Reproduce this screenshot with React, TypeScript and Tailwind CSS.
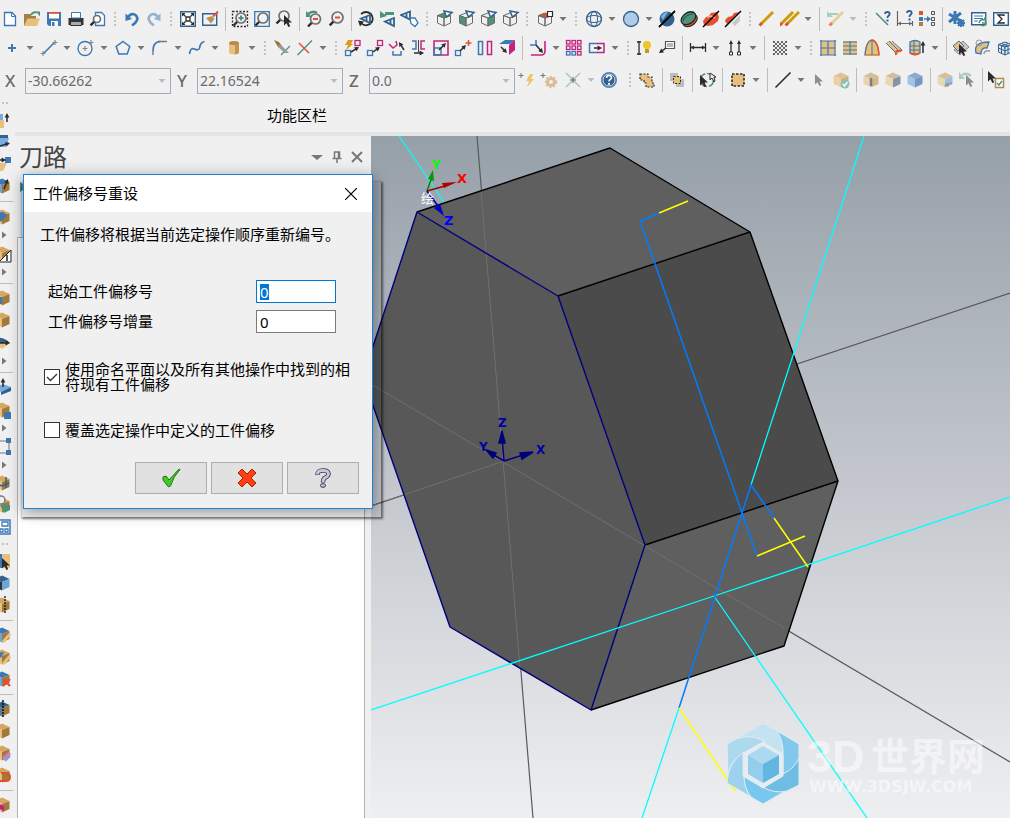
import React from "react";

type Kids = { children?: React.ReactNode };

const BLUE = "#3b78b4";
const NAVY = "#33608c";
const GOLD = "#e8c07d";
const GREEN = "#4f927b";
const RED = "#e2502f";
const PINK = "#c2237f";
const DARK = "#2b2b2b";

function Art({ children }: Kids) {
  return (
    <svg viewBox="0 0 20 20" className="h-5 w-5 shrink-0" fill="none" aria-hidden="true">
      {children}
    </svg>
  );
}

function Caret({ faded, side }: { faded?: boolean; side?: boolean }) {
  return (
    <svg viewBox="0 0 8 8" className="h-2 w-2 shrink-0" aria-hidden="true">
      <path d={side ? "M2 0.5L6.5 4L2 7.5z" : "M0.5 2H7.5L4 6z"} fill={faded ? "#bdbdbd" : "#777"} />
    </svg>
  );
}

/* ---------- shared icon parts ---------- */

function Lens({ x = 11, y = 8, r = 4.5, tint = "none" }: { x?: number; y?: number; r?: number; tint?: string }) {
  return (
    <>
      <path d={`M${x - r * 0.7} ${y + r * 0.7}L${x - r * 0.7 - 4} ${y + r * 0.7 + 4}`} stroke={DARK} strokeWidth="2.4" />
      <circle cx={x} cy={y} r={r} stroke="#6f6f6f" strokeWidth="1.7" fill={tint} />
    </>
  );
}

function Cube({ top = "none", left = "none", right = "none", line = "#6b6b6b" }: { top?: string; left?: string; right?: string; line?: string }) {
  return (
    <g stroke={line} strokeWidth="1" strokeLinejoin="round">
      <path d="M3.5 6.5L10 4L16.5 6.5L10 9z" fill={top} />
      <path d="M3.5 6.5V14L10 17V9z" fill={left} />
      <path d="M16.5 6.5V14L10 17V9z" fill={right} />
    </g>
  );
}

function Solid({ top, left, right }: { top: string; left: string; right: string }) {
  return (
    <>
      <path d="M2.5 6L10 2.5L17.5 6L10 9z" fill={top} />
      <path d="M2.5 6V14L10 17.5V9z" fill={left} />
      <path d="M17.5 6V14L10 17.5V9z" fill={right} />
    </>
  );
}

function Eye({ x = 0, y = 0 }: { x?: number; y?: number }) {
  return (
    <g transform={`translate(${x} ${y})`}>
      <path d="M10 0L1 3.5L10 8z" stroke={NAVY} strokeWidth="1.8" />
      <path d="M6.5 2V6" stroke={NAVY} strokeWidth="1.8" />
    </g>
  );
}

function Pointer({ x = 0, y = 0, color = DARK }: { x?: number; y?: number; color?: string }) {
  return <path transform={`translate(${x} ${y})`} d="M0 0V10.5L2.6 8.2L4.3 12L6.2 11.2L4.6 7.5H8z" fill={color} />;
}

function Dart({ x1, y1, x2, y2, color = DARK }: { x1: number; y1: number; x2: number; y2: number; color?: string }) {
  const a = Math.atan2(y2 - y1, x2 - x1);
  const wing = (t: number) => `${x2 - 5 * Math.cos(a + t)} ${y2 - 5 * Math.sin(a + t)}`;
  return (
    <>
      <path d={`M${x1} ${y1}L${x2 - 2 * Math.cos(a)} ${y2 - 2 * Math.sin(a)}`} stroke={color} strokeWidth="1.5" />
      <path d={`M${x2} ${y2}L${wing(0.5)}L${wing(-0.5)}z`} fill={color} />
    </>
  );
}

function Box({ x, y, w = 5, h = 5, c }: { x: number; y: number; w?: number; h?: number; c: string }) {
  return <rect x={x} y={y} width={w} height={h} stroke={c} strokeWidth="1.3" />;
}

function Pencil({ x = 0, c = "#cf9b0a", o = 1 }: { x?: number; c?: string; o?: number }) {
  return (
    <g transform={`translate(${x} 0)`} opacity={o}>
      <path d="M4.5 14.5L16 3" stroke={c} strokeWidth="3" />
      <path d="M2.5 16.5L5 14" stroke={RED} strokeWidth="3" />
    </g>
  );
}

function Query({ x, y }: { x: number; y: number }) {
  return (
    <>
      <path d={`M${x} ${y + 2}q0 -2 2.3 -2q2.4 0 2.4 2q0 1 -1.4 2q-.8 .6 -.8 2`} stroke={NAVY} strokeWidth="1.8" />
      <rect x={x + 1.5} y={y + 7.5} width="2" height="2" fill={NAVY} />
    </>
  );
}

/* ---------- toolbar grammar ---------- */

type Tool =
  | { kind: "icon" | "drop"; name: string; art: React.ReactNode; faded?: boolean }
  | { kind: "sep" | "grip" };

const icon = (name: string, art: React.ReactNode): Tool => ({ kind: "icon", name, art });
const drop = (name: string, art: React.ReactNode, faded = false): Tool => ({ kind: "drop", name, art, faded });
const sep: Tool = { kind: "sep" };
const grip: Tool = { kind: "grip" };

function ToolStrip({ tools }: { tools: Tool[] }) {
  return (
    <>
      {tools.map((t, i) => {
        if (t.kind === "sep")
          return (
            <span key={i} className="flex w-2 shrink-0 justify-center">
              <span className="h-6 w-px bg-[#bdbdbd]" />
            </span>
          );
        if (t.kind === "grip")
          return (
            <span key={i} className="flex w-3 shrink-0 flex-col items-center gap-0.5">
              <span className="size-0.5 bg-[#c4c4c4]" />
              <span className="size-0.5 bg-[#c4c4c4]" />
              <span className="size-0.5 bg-[#c4c4c4]" />
              <span className="size-0.5 bg-[#c4c4c4]" />
            </span>
          );
        if (t.kind === "icon")
          return (
            <button key={i} aria-label={t.name} className="flex h-6 w-[22px] shrink-0 items-center justify-center">
              <Art>{t.art}</Art>
            </button>
          );
        return (
          <button key={i} aria-label={t.name} className="flex h-6 w-[37px] shrink-0 items-center gap-1 pl-0.5">
            <Art>{t.art}</Art>
            <Caret faded={t.faded} />
          </button>
        );
      })}
    </>
  );
}

const flag = <path d="M10 2L18 3.5L12.5 8z" fill="#fff" stroke={NAVY} strokeWidth="1.5" />;

const viewTools: Tool[] = [
  icon("New", <><path d="M4.5 3.5h7.5l3.5 3.5v9.500h-11z" fill="#fff" stroke={BLUE} strokeWidth="1.3" /><path d="M11.500 3.500v4h4" stroke={BLUE} /></>),
  icon("Open", <><path d="M2 5h6l1.500 2H14v10H2z" fill="#a87f43" /><path d="M5.500 9.500H18L15 17H2z" fill={GOLD} /><path d="M9 6q2-3.500 6-2.500" stroke={GREEN} strokeWidth="1.800" /><path d="M14 2.500h4v5z" fill={GREEN} /></>),
  icon("Save", <><path d="M3 3h14v14H5L3 15z" fill={BLUE} /><path d="M5 4h10v5.500H5z" fill="#fff" /><path d="M5 3h10v1.800H5z" fill={RED} /><path d="M7 12h7v5H7z" fill="#fff" /><path d="M8 13h2.500v4H8z" fill={BLUE} /></>),
  icon("Print", <><path d="M2.500 9h15v7h-15z" fill="#333" /><path d="M5.500 3.500h9V9h-9z" fill="#fff" stroke={BLUE} /><path d="M4.500 12.500h11v4h-11z" fill="#aaa" stroke="#333" /></>),
  icon("Print preview", <><path d="M7.500 3.500h6l3 3v10h-9z" fill="#fff" stroke={BLUE} strokeWidth="1.300" /><Lens x={9} y={10} r={3.500} tint="#fff" /></>),
  grip,
  icon("Undo", <><path d="M6 8Q10 3 14 6.500Q18 11 10 16.500" stroke={BLUE} strokeWidth="2.600" /><path d="M3.500 4.500V12l6.500-2z" fill={BLUE} /></>),
  icon("Redo", <g opacity=".5"><path d="M14 8Q10 3 6 6.500Q2 11 10 16.500" stroke={BLUE} strokeWidth="2.600" /><path d="M16.500 4.500V12L10 10z" fill={BLUE} /></g>),
  grip,
  icon("Fit", <><path d="M2.700 2.700h14.600v14.600H2.700z" fill="#fff" stroke={NAVY} strokeWidth="1.400" /><path d="M8 8h4v4H8z" stroke={DARK} strokeWidth="1.300" /><path d="M4.500 4.500l3 3M15.500 4.500l-3 3M4.500 15.500l3-3M15.500 15.500l-3-3" stroke={DARK} strokeWidth="1.300" /><path d="M4 4h3.500L4 7.500zM16 4h-3.500L16 7.500zM4 16h3.500L4 12.500zM16 16h-3.500l3.500-3.500z" fill={DARK} /></>),
  icon("Repaint", <><path d="M2.700 4.700h14v11.600h-14z" fill="#eef3f8" stroke={NAVY} strokeWidth="1.400" /><path d="M6 9l6-2 2.500 3-3.500 4.500z" fill="#bd9250" /><path d="M13 7.500L18 2.500" stroke={RED} strokeWidth="2" /></>),
  sep,
  icon("Zoom target", <><path d="M2.500 2.500h15v15h-15z" stroke={DARK} strokeWidth="1.300" strokeDasharray="2 1.500" /><Lens x={11} y={9} r={5} tint="#f0f0f0" /><path d="M8.500 9h5M11 6.500v5" stroke={GREEN} strokeWidth="2" /></>),
  icon("Zoom window", <><path d="M2.700 2.700h14.600v14.600H2.700z" stroke={BLUE} strokeWidth="1.300" /><Lens x={11} y={9} r={5} tint="#f3f3f3" /></>),
  icon("Zoom selected", <><Lens x={10} y={7} r={5} /><Pointer x={10} y={6} /></>),
  sep,
  icon("Unzoom previous", <><Lens x={11.500} y={10} r={5} tint="#eee" /><path d="M9 10h5" stroke={RED} strokeWidth="2" /><path d="M4 5q5-4 9-1" stroke={GREEN} strokeWidth="2.500" /><path d="M2 2v6h6z" fill={GREEN} /></>),
  icon("Unzoom", <><Lens x={11.500} y={8.500} r={5.500} tint="#eee" /><path d="M9 8.500h5" stroke={RED} strokeWidth="2" /></>),
  sep,
  icon("Rotate view", <><path d="M5 5Q10 1 15 5Q19 11 14 15Q9 18 5 14" stroke={DARK} strokeWidth="1.700" /><path d="M2 11.500l6 1-4 5z" fill={DARK} /><Eye x={4} y={6} /></>),
  icon("Previous view", <><path d="M7 4.500h9" stroke={GREEN} strokeWidth="3" /><path d="M2 2v7l7-2z" fill={GREEN} /><Eye x={6} y={9} /></>),
  icon("Named views", <><Eye x={0} y={2.500} /><path d="M10 9h5l3 5-3 3.500-4-3z" fill="#fff" stroke={BLUE} strokeWidth="1.300" /></>),
  grip,
  icon("Top view", <><Cube top={GREEN} />{flag}</>),
  icon("Front view", <><Cube left={GREEN} />{flag}</>),
  icon("Right view", <><Cube right={GREEN} />{flag}</>),
  icon("Isometric view", <><Cube />{flag}</>),
  grip,
  drop("Planes", <><Cube top={RED} /><path d="M12.500 2.500h5v5h-5z" fill="#fff" stroke={DARK} strokeWidth="1.200" /></>),
  grip,
  drop("Wireframe", <><circle cx="10" cy="10" r="7.500" stroke={NAVY} strokeWidth="1.300" /><ellipse cx="10" cy="10" rx="3.500" ry="7.500" stroke={NAVY} /><ellipse cx="10" cy="10" rx="7.500" ry="3.500" stroke={NAVY} /></>),
  drop("Shaded", <circle cx="10" cy="10" r="7.500" fill="#b0cbe8" stroke={NAVY} strokeWidth="1.300" />),
  icon("Material", <><circle cx="10" cy="10" r="7.500" fill={NAVY} /><path d="M4 8q2-5 7-5l-5 8z" fill="#72b2e8" /><path d="M2 18L18 2" stroke="#000" strokeWidth="1.800" /></>),
  icon("Backside", <g transform="rotate(-35 10 10)"><ellipse cx="10" cy="12" rx="8" ry="5" fill={RED} stroke="#222" /><ellipse cx="10" cy="9" rx="8" ry="5.500" fill={GREEN} stroke="#222" strokeWidth="1.300" /><path d="M4 8q6-4 12 0" stroke="#25594a" /></g>),
  icon("Translucency", <><path d="M2 12l3-4 3-1 2-3 6-1 2 5-1 4-5 4-5 1-4-1z" fill={RED} /><path d="M6 8l4-1 4 2" stroke="#ffb3a0" strokeWidth="1.500" /><path d="M2 18L18 2" stroke="#000" strokeWidth="1.500" /></>),
  icon("Half translucency", <><path d="M2 11l3-3 4-1 2-3 5-1L5 15l-2-1z" fill={RED} /><path d="M9 14l8-8v6l-5 5z" fill="#c8c8c8" /><path d="M2 18L18 2" stroke="#000" strokeWidth="1.500" /></>),
  grip,
  icon("Clear colors", <Pencil />),
  drop("Blank", <><Pencil x={-3} /><Pencil x={3} /></>),
  sep,
  drop("Unblank", <><Pencil x={2} c="#e3c36d" o={0.7} /><path d="M4 5h9" stroke="#a9cdbf" strokeWidth="2" /><path d="M2 2v6h6z" fill="#a9cdbf" /></>, true),
  grip,
  icon("Analyze", <><path d="M3 4l12 12" stroke={GREEN} strokeWidth="1.600" /><Query x={12} y={3} /></>),
  icon("Analyze distance", <><path d="M2.500 2v15M17.500 12v5M3 14.500h14" stroke="#666" strokeWidth="1.200" /><path d="M3 14.500l3-2v4zM17 14.500l-3-2v4z" fill="#666" /><Query x={12} y={2} /></>),
  icon("Change attributes", <><path d="M2 2h4v4H2z" fill={RED} /><path d="M2 8h4v4H2z" fill={BLUE} /><path d="M2 13h4v4H2z" fill="#a87f43" /><path d="M7 10h4" stroke={BLUE} strokeWidth="1.500" /><path d="M10 7l4 3-4 3z" fill={BLUE} /><path d="M14.500 2.500h3v3h-3zM14.500 8.500h3v3h-3zM14.500 13.500h3v3h-3z" stroke="#555" /></>),
  sep,
  icon("Configuration", <><g stroke={BLUE} strokeWidth="3"><path d="M8 2v13M2 5l12 7M14 4L2 13" /></g><circle cx="14" cy="14" r="3" fill={BLUE} /><g stroke={BLUE} strokeWidth="2"><path d="M14 10v8M10 14h8M11 11l6 6M17 11l-6 6" /></g></>),
  icon("Regenerate", <><path d="M2.700 3.700h14v12h-14z" fill="#fff" stroke={NAVY} strokeWidth="1.400" /><path d="M5 7h9M5 9.500h9M5 12h4" stroke={BLUE} /><path d="M10 14q1-4 5-3l1-2 1 5h-4M17 14q-2 4-5 2" stroke={GREEN} strokeWidth="1.500" /></>),
  icon("Statistics", <><path d="M2.700 3.700h14.600v12.600H2.700z" fill="#fff" stroke={NAVY} strokeWidth="1.400" /><path d="M13 7V6H7l4 4-4 4h6v-1" stroke={DARK} strokeWidth="1.300" /></>),
];

const drawTools: Tool[] = [
  drop("Point", <path d="M10 6v8M6 10h8" stroke={BLUE} strokeWidth="2" />),
  drop("Line", <><path d="M5 15L15 5" stroke={BLUE} strokeWidth="1.600" /><path d="M4 13v5M1.500 15.500h5M16 2v5M13.500 4.500h5" stroke="#888" strokeWidth="1.200" /></>),
  drop("Circle", <><circle cx="9" cy="10.500" r="7" stroke={BLUE} strokeWidth="1.400" /><path d="M9 8v5M6.500 10.500h5M15 2v5M12.500 4.500h5" stroke="#888" strokeWidth="1.200" /></>),
  drop("Polygon", <path d="M10 3.500l6.800 5-2.600 7.500H5.800L3.200 8.500z" stroke={BLUE} strokeWidth="1.500" />),
  drop("Fillet", <><path d="M3 17v-4M8 3.500h9" stroke="#777" strokeWidth="1.400" /><path d="M3 13Q3 4 10 3.500" stroke={BLUE} strokeWidth="1.600" /></>),
  drop("Spline", <path d="M2.500 16q1-7 5-5q4 2 5-1q1-6 5-6.500" stroke={BLUE} strokeWidth="1.700" />),
  drop("Cylinder", <><path d="M5 5h10v10q-5 3-10 0z" fill={GOLD} /><path d="M11 5h4v10q-2 1-4 1.500z" fill="#c5954e" /><ellipse cx="10" cy="5" rx="5" ry="2" fill="#b88a45" /></>),
  grip,
  icon("Trim to entities", <><path d="M9 17L18 8" stroke={GREEN} strokeWidth="1.300" /><path d="M2 2l5 2 3 4-4 1z" fill="#9c7436" /><path d="M8 6l9 9h-4L6 9z" fill="#999" /></>),
  drop("Divide", <><path d="M2.500 17L17 2.500" stroke={GREEN} strokeWidth="1.500" /><path d="M4 5l10 10" stroke={RED} strokeWidth="1.500" /></>),
  grip,
  icon("Dynamic transform", <><path d="M5 2h5L8 6h2l-7 6 2-5H2z" fill="#d99c12" /><Box x={12} y={2.500} c={PINK} /><Box x={2.500} y={12.500} c={BLUE} /><Dart x1={8} y1={14} x2={16} y2={9} /></>),
  icon("Translate", <><Box x={12.500} y={2.500} c={PINK} /><Box x={2.500} y={12.500} c={BLUE} /><Dart x1={8} y1={14} x2={15} y2={9} /></>),
  icon("Rotate", <><path d="M2 6l4 4 4-3-1-4" stroke={PINK} strokeWidth="1.500" /><path d="M6 13v4h8v-4" stroke={BLUE} strokeWidth="1.500" /><Dart x1={17} y1={12} x2={12} y2={4} /></>),
  icon("Mirror", <><path d="M3 3h4v8H3" stroke={BLUE} strokeWidth="1.500" /><path d="M16 3h-4v8h4" stroke={PINK} strokeWidth="1.500" /><path d="M9.500 2v12" stroke="#444" /><Dart x1={5} y1={15} x2={15} y2={15} /></>),
  icon("Scale", <><path d="M3 3h14v14H3z" stroke={PINK} strokeWidth="1.600" /><path d="M3 10h7v7H3z" stroke={BLUE} strokeWidth="1.400" /><Dart x1={8} y1={12} x2={15} y2={5} /></>),
  icon("Move to origin", <><Box x={2.500} y={12.500} c={BLUE} /><Dart x1={7} y1={13} x2={13} y2={7} /><path d="M15.500 2v6M12.500 5h6" stroke={RED} strokeWidth="1.500" /></>),
  icon("Offset", <><path d="M3.500 3.500h4v13h-4z" stroke={BLUE} strokeWidth="1.500" /><path d="M12.500 3.500h4v13h-4z" stroke={PINK} strokeWidth="1.500" /></>),
  icon("Project", <><path d="M2 6l6-4h10l-5 4z" fill={BLUE} /><path d="M12 7l6-5v10l-6 5z" fill={PINK} /><Dart x1={4} y1={9} x2={10} y2={15} /></>),
  sep,
  drop("Wrap", <><path d="M17 3v10q0 4-4 4H3" stroke={PINK} strokeWidth="1.600" /><path d="M2 7h6V2" stroke={BLUE} strokeWidth="1.500" /><Dart x1={8} y1={7} x2={15} y2={15} /></>),
  icon("Rectangular array", <>{[3, 8.500, 14].map((y) => [3, 8.500, 14].map((x) => <Box key={`${x}-${y}`} x={x - 0.500} y={y - 0.500} w={3.500} h={3.500} c={y > 9 && x < 9 ? BLUE : PINK} />))}</>),
  drop("Stretch", <><path d="M10 5.500h7v9h-7" stroke={PINK} strokeWidth="1.500" /><path d="M10 5.500H2.500v9H10" stroke={BLUE} strokeWidth="1.500" /><Dart x1={7} y1={10} x2={15} y2={10} /></>),
  grip,
  icon("Smart light", <><path d="M4 3v14M2 4h4M2 16h4" stroke={DARK} strokeWidth="1.300" /><circle cx="12" cy="7" r="4" fill="#f0c52c" /><path d="M10 11h4v4h-4z" fill="#c59a18" /></>),
  icon("Note", <><path d="M8.500 3.500h9v7h-9z" stroke="#555" strokeWidth="1.200" fill="#fff" /><path d="M10 6h6M10 8h6" stroke="#777" /><Dart x1={9} y1={10} x2={2} y2={15} /></>),
  sep,
  drop("Dimension", <><path d="M2.500 5v9M17.500 5v9M3 9.500h14" stroke={DARK} strokeWidth="1.300" /><path d="M3 9.500l3-2v4zM17 9.500l-3-2v4z" fill={DARK} /></>),
  drop("Ordinate", <><path d="M6 4v10M14 4v10" stroke={DARK} strokeWidth="1.300" /><path d="M6 2l2 4H4zM14 2l2 4h-4z" fill={DARK} /><path d="M4.500 14h3v3h-3zM12.500 14h3v3h-3z" fill="#fff" stroke={DARK} /></>),
  sep,
  drop("Hatch", <>{Array.from({ length: 7 }, (_, r) => <path key={r} d={`M${r % 2 ? 5 : 3} ${4 + r * 2}H17`} stroke="#666" strokeWidth="2" strokeDasharray="2 2" />)}</>),
  grip,
  icon("Flat boundary", <><path d="M3 3h14v14H3z" fill={GOLD} /><path d="M3 2v16M17 2v16M10 3v14M2 3h16M2 17h16M3 10h14" stroke={BLUE} strokeWidth="1.200" /></>),
  icon("Ruled", <><path d="M3 3h14v14H3z" fill={GOLD} /><path d="M3 4h14M3 8h14M3 12h14M3 16h14M10 3v14" stroke={BLUE} strokeWidth="1.100" /></>),
  icon("Revolve surface", <><path d="M3 17Q4 3 10 2Q16 3 17 17z" fill={GOLD} stroke="#c78335" strokeWidth="1.300" /><path d="M3 17Q4 3 10 2v15" stroke={BLUE} /><path d="M10 2Q16 3 17 17" stroke={RED} strokeWidth="1.300" /></>),
  icon("Sweep surface", <><path d="M2 5q3-4 6-1l10 8-5 5z" fill={GOLD} /><path d="M2 5l11 11M8 3l10 9M5 3l10 10" stroke={BLUE} /><path d="M12 17q-1-4 2-4t4-1" stroke={RED} strokeWidth="1.800" /></>),
  drop("Cylinder surface", <><path d="M3 4q5-3 10 0v11q-5 3-10 0z" fill={GOLD} stroke={BLUE} strokeWidth="1.300" /><path d="M3 8h10M3 12h10M7 3v13" stroke={BLUE} /><path d="M3 15q5 3 10 0" stroke={RED} strokeWidth="1.800" /><Dart x1={16} y1={15} x2={16} y2={3} /></>),
  sep,
  icon("Trim surface", <><path d="M3 12l9-9 6 6-9 8z" fill="#c9c9c9" stroke="#888" /><path d="M2 8l6-5 5 5-6 5z" fill={GOLD} stroke={BLUE} /><Pointer x={8} y={6} /></>),
  icon("Fillet surface", <><path d="M3 15Q0 4 16 4l-2 6q-6-1-6 6z" fill={GOLD} stroke={BLUE} strokeWidth="1.300" /><circle cx="6" cy="5" r="3" stroke="#999" /><path d="M11 16q0-4 6-3" stroke="#999" strokeWidth="1.500" /></>),
  icon("Surface box", <><Cube top="#dce8f4" left="#dce8f4" right="#dce8f4" line={NAVY} /><path d="M6.500 5.500l6.500 2.500v8M13 5.500L6.500 8v8M3.500 10l6.500 3 6.500-3" stroke={NAVY} /></>),
];

const selectTools: Tool[] = [
  icon("AutoCursor", <><path d="M3 3v5M0.500 5.500h5" stroke="#777" /><path d="M12 4h3l-2 5h3l-7 8 2-6H8z" fill="#e8c768" /></>),
  icon("AutoCursor settings", <><path d="M3 3v5M0.500 5.500h5" stroke="#777" /><circle cx="11" cy="12" r="3.500" stroke="#d9bd92" strokeWidth="3" /><circle cx="11" cy="12" r="5.500" stroke="#d9bd92" strokeWidth="1.500" strokeDasharray="2 2" /></>),
  drop("Cursor override", <><path d="M3 3l14 14M17 3L3 17" stroke="#a3c4b8" strokeWidth="1.300" /><path d="M10 7v6M7 10h6" stroke="#666" /></>, true),
  icon("Help", <><circle cx="10" cy="10" r="7.500" fill={NAVY} stroke="#5c8dc0" strokeWidth="1.200" /><circle cx="10" cy="10" r="6" stroke="#fff" strokeWidth=".8" /><path d="M7.500 8q0-2.500 2.500-2.500t2.500 2q0 1.200-1.300 2t-1.200 2" stroke="#fff" strokeWidth="1.600" /><path d="M9 13h2v1.800H9z" fill="#fff" /></>),
];

const filterTools: Tool[] = [
  grip,
  icon("Select all", <path d="M3 4h8v3h4v6h2v4h-8v-4H7v-3H3z" fill={GOLD} stroke={DARK} strokeWidth="1.200" strokeDasharray="2 1.500" />),
  sep,
  icon("Select only", <><path d="M3 3h8v8H3zM9 9h8v8H9z" fill="#bdbdbd" /><path d="M6.500 6.500h7v7h-7z" fill={GOLD} stroke={DARK} strokeDasharray="2 1.500" /></>),
  sep,
  icon("Toggle selection", <><circle cx="10" cy="10" r="6.500" stroke={GREEN} strokeWidth="1.600" strokeDasharray="8 2" /><Pointer x={3} y={5} /><path d="M13 3v7l2-2 2 4 1-1-1-4h2z" stroke={DARK} fill="#eee" /></>),
  sep,
  drop("Window select", <path d="M4 4h12v12H4z" fill={GOLD} stroke={DARK} strokeWidth="1.600" strokeDasharray="2.500 1.500" />),
  sep,
  drop("Line select", <path d="M2.500 17.500L17.500 2.500" stroke={DARK} strokeWidth="1.600" />),
  icon("Select", <Pointer x={6} y={4} color="#8d8d8d" />),
  icon("Select solid", <g opacity=".65"><Solid top="#d9ab69" left={GOLD} right="#b78b4b" /><circle cx="14" cy="14" r="4.500" fill="#5ca88b" /><path d="M12 14l1.500 2 3-4" stroke="#fff" strokeWidth="1.500" /></g>),
  sep,
  icon("Edge select", <><Solid top="#d4bd98" left="#ecd3ac" right="#d3b787" /><path d="M10 8v8" stroke="#6b7f97" strokeWidth="2.500" /></>),
  icon("Face select", <Solid top="#d4bd98" left="#ecd7b5" right="#8094ab" />),
  icon("Body select", <Solid top="#8aabce" left="#a0c3e7" right="#7397c0" />),
  sep,
  icon("Back select", <><Solid top="#d4bd98" left="#ead5b4" right="#9dbfe1" /><Dart x1={17} y1={13} x2={9} y2={16} color="#999" /></>),
  icon("Last select", <><path d="M5 5q5-3 9 1" stroke="#a9cdbf" strokeWidth="2.300" /><path d="M2 2v7h6z" fill="#a9cdbf" /><Pointer x={9} y={5} color="#8d8d8d" /></>),
  sep,
  icon("Verify selection", <><path d="M8.500 8.500h8v9h-8z" fill="#fff" stroke="#b08a4b" strokeWidth="1.500" /><path d="M10 13l2 2 3-4" stroke={GREEN} strokeWidth="1.500" /><Pointer x={1} y={1} /></>),
];

/* ---------- side rail ---------- */

const brown = <Solid top="#d6a660" left={GOLD} right="#a2783b" />;
const bluetop = <Solid top={BLUE} left="#6ea6db" right="#a2783b" />;

const railTools: Tool[] = [
  icon("Extrude", <><path d="M0 4h11v6H0z" fill="#76aee2" /><path d="M0 10h12v8H0z" fill={GOLD} /><Dart x1={15} y1={12} x2={15} y2={3} /></>),
  icon("Revolve", <><path d="M0 3h16v3H0z" fill={NAVY} /><path d="M0 6h17l-3 9H0z" fill="#76aee2" /><Dart x1={5} y1={15} x2={18} y2={11} /></>),
  icon("Sweep", <><path d="M13 3h6v6h-6z" fill={BLUE} /><path d="M5 9h10l-4 8H6z" fill={GOLD} /><Dart x1={5} y1={6} x2={14} y2={6} /></>),
  icon("Loft", <>{bluetop}<Dart x1={12} y1={13} x2={16} y2={3} /></>),
  sep,
  drop("Cut", <>{brown}<path d="M2 6l9-1 4 3-6 7z" fill={BLUE} /></>),
  drop("Impression", <>{brown}<path d="M7 18L19 6v12z" fill="#fff" stroke="#222" /><path d="M15 11v6" stroke="#222" strokeWidth="1.500" /></>),
  sep,
  icon("Fillet solid", <>{brown}<path d="M4 9h6v7H4z" fill={BLUE} /></>),
  icon("Chamfer solid", brown),
  drop("Shell", <><path d="M2 8l8-3 8 5-8 6z" fill={GOLD} /><path d="M2 6q8-4 16 4H2" fill={NAVY} /><Dart x1={4} y1={10} x2={18} y2={10} /></>),
  sep,
  icon("Push pull", <><path d="M2 11l9-4 8 3-10 5z" fill="#75aadd" /><path d="M9 15l10-5v4l-10 4z" fill={NAVY} /><Dart x1={11} y1={10} x2={11} y2={1} /></>),
  drop("Pattern", <>{brown}<path d="M12 12h7v7h-7z" fill={BLUE} /></>),
  drop("Layout", <><path d="M2 4h15v12H2" stroke="#777" /><path d="M14 1h5v5h-5zM14 13h5v5h-5z" fill={BLUE} /></>),
  icon("Solid mesh", <>{brown}<path d="M3 10l7 3 7-3M7 4v11M14 4v11" stroke={NAVY} strokeWidth="1.500" /></>),
  icon("Feature search", <>{brown}<path d="M8 10h10v5l-6 3z" fill={GREEN} /><circle cx="9" cy="5" r="4" stroke="#777" strokeWidth="1.500" fill="#eee" /></>),
  icon("Drawing layout", <><path d="M1 3h17v14H1z" stroke={BLUE} strokeWidth="1.500" fill="#fff" /><path d="M10 5h6v4h-6zM8 12h3v3H8zM13 12h3v3h-3z" stroke={BLUE} strokeWidth="1.300" /></>),
  grip,
  icon("Select face", <><path d="M1 3h17v14H1z" fill={GOLD} /><path d="M1 3h9v14H1z" fill={BLUE} /><Pointer x={10} y={7} /></>),
  icon("Push face", <Solid top={NAVY} left="#333" right="#6ba5da" />),
  icon("Split", <>{brown}<path d="M13 1v18" stroke="#111" strokeWidth="1.300" strokeDasharray="2 1" /></>),
  sep,
  icon("Edit surface", <>{bluetop}<path d="M11 17l7-8" stroke={GOLD} strokeWidth="3" /></>),
  icon("Edit face", <>{brown}<path d="M3 6l9-1-3 6z" fill={BLUE} /><path d="M11 17l7-8" stroke={GOLD} strokeWidth="3" /></>),
  icon("Remove face", <>{bluetop}<path d="M11 10l7 7M18 10l-7 7" stroke={RED} strokeWidth="2.300" /></>),
  sep,
  icon("Section", <><Solid top={NAVY} left="#55799f" right="#a2783b" /><path d="M11 1v18" stroke="#111" strokeWidth="1.500" strokeDasharray="2 1" /></>),
  icon("Simplify", brown),
  icon("Erase", <>{brown}<path d="M11 16l7-6" stroke="#d77bb8" strokeWidth="3" /><path d="M13 18l5-5" stroke="#69a7e3" strokeWidth="2" /></>),
  icon("Loop", <>{brown}<path d="M9 8h5q4 0 4 4t-4 4H8" stroke={RED} strokeWidth="2" /></>),
  sep,
  icon("Color face", <>{brown}<path d="M5 8l7 3v5l-7-3z" fill={PINK} /></>),
];

function Rail() {
  return (
    <aside className="flex w-[15px] shrink-0 flex-col overflow-hidden pt-1">
      <span className="mb-1 flex h-[3px] gap-0.5 pl-0.5">
        <span className="size-0.5 bg-[#c4c4c4]" />
        <span className="size-0.5 bg-[#c4c4c4]" />
      </span>
      {railTools.map((t, i) => {
        if (t.kind === "sep")
          return (
            <span key={i} className="flex h-2 shrink-0 items-center">
              <span className="h-px w-[13px] bg-[#bdbdbd]" />
            </span>
          );
        if (t.kind === "grip")
          return (
            <span key={i} className="flex h-3 shrink-0 items-center gap-0.5 pl-0.5">
              <span className="size-0.5 bg-[#c4c4c4]" />
              <span className="size-0.5 bg-[#c4c4c4]" />
            </span>
          );
        if (t.kind === "icon")
          return (
            <button key={i} aria-label={t.name} className="flex h-[22px] w-3 shrink-0 items-center justify-end">
              <Art>{t.art}</Art>
            </button>
          );
        return (
          <button key={i} aria-label={t.name} className="flex h-[37px] w-3 shrink-0 flex-col items-end gap-1 pt-0.5">
            <Art>{t.art}</Art>
            <span className="flex w-full">
              <Caret side />
            </span>
          </button>
        );
      })}
    </aside>
  );
}

function Coord({ axis, value }: { axis: string; value: string }) {
  const id = `coord-${axis}`;
  return (
    <div className="flex shrink-0 items-center pt-0.5">
      <label htmlFor={id} className="w-[26px] pl-1.5 text-[17px] leading-5 font-medium text-[#6a6a6a]">
        {axis}
      </label>
      <span className="flex h-[26px] w-[146px] items-center border border-[#a3adb9] bg-[#f0f0f0] pr-1">
        <input id={id} defaultValue={value} className="min-w-0 flex-1 bg-transparent pl-0.5 text-sm text-[#6a6a6a] outline-none" />
        <Caret faded />
      </span>
    </div>
  );
}

/* ---------- graphics window ---------- */

function Viewport() {
  return (
    <main className="relative min-h-[420px] min-w-0 flex-1 overflow-hidden bg-linear-to-b from-[#96a0a9] via-[#c3c7cd] to-[#eeeff1]">
      <svg viewBox="371 136 639 682" preserveAspectRatio="xMinYMin slice" className="absolute inset-0 h-full w-full" fill="none" aria-label="3D model">
        <g stroke="#5a5a5a" strokeWidth="1.200">
          <path d="M477 136L533 818M1010 293L371 506M371 384L1010 762" />
        </g>
        <path d="M417 212L610 148L750 232L558 296z" fill="#5f5f5f" />
        <path d="M417 212L558 296L645 545L591 710L450 627L363 377z" fill="#585858" />
        <path d="M645 545L838 481L784 646L591 710z" fill="#5f5f5f" />
        <path d="M481 190L520 668M371 506L504 461M371 384L784 628" stroke="#707070" />
        <path d="M558 296L750 232L838 481L645 545z" fill="#4b4b4b" />
        <g strokeWidth="1.400" strokeLinejoin="round">
          <path d="M417 212L610 148L750 232L838 481L784 646L591 710M558 296L750 232M645 545L838 481" stroke="#000" />
          <path d="M417 212L558 296L645 545L591 710L450 627L363 377z" stroke="#00007c" />
        </g>
        <g stroke="#00ffff" strokeWidth="1.300">
          <path d="M864 136L751 485M679 708L642 818M371 710L714 596L1010 497M714 596L867 818M399 136L444 202" />
        </g>
        <path d="M659 213L640 221L757 556M774 518L751 485L679 708" stroke="#007cff" strokeWidth="1.500" />
        <path d="M659 213L688 201M757 556L805 536M774 518L808 567M679 708L735 791" stroke="#ff0" strokeWidth="1.500" />

        <g stroke="#00007c" strokeWidth="1.500" fill="#00007c">
          <path d="M504 461L502 438M504 461L526 454M504 461L492 454" />
          <path d="M502 431L505 443H499zM533 452L522 459L520 453zM486 450L496 453L493 458z" />
        </g>
        <g fontFamily="DejaVu Sans, sans-serif" fontWeight="bold" fontSize="12">
          <g fill="#0000a8">
            <text x="498" y="427">Z</text>
            <text x="536" y="454">X</text>
            <text x="479" y="451">Y</text>
          </g>
          <text x="457" y="183" fontSize="13" fill="#f00">X</text>
          <text x="432" y="169" fontSize="12" fill="#0f0">Y</text>
          <text x="444" y="225" fontSize="13" fill="#00f">Z</text>
        </g>
        <path d="M427 191L432 177" stroke="#008a00" strokeWidth="1.600" />
        <path d="M433 170L434 181L428 179z" fill="#009b00" />
        <path d="M427 191L445 186" stroke="#a00000" strokeWidth="1.600" />
        <path d="M457 182L444 188L442 183z" fill="#b00000" />
        <path d="M427 191L438 206" stroke="#0000b0" strokeWidth="1.600" />
        <path d="M444 216L434 208L440 204z" fill="#0000c0" />
        <text x="421" y="203" fontSize="13" fill="#fff" fontFamily="Noto Sans CJK SC, sans-serif">绘</text>

        <g opacity=".85" stroke="#e3edf3" strokeWidth="1">
          <path d="M727 744L763 723L780 732Q783 745 783 757L763 743L745 751Q748 738 727 744z" fill="#bfe2f2" />
          <path d="M727 744Q745 731 765 741L745 752Q728 762 728 778L727 744z" fill="#a4d7f0" />
          <path d="M727 783Q728 762 744 752V776Q745 790 751 797z" fill="#91cdef" />
          <path d="M744 776L763 787Q775 794 787 790L763 804L751 797Q744 788 744 776z" fill="#63c1f0" />
          <path d="M763 787L783 774Q795 766 799 756V785L787 791Q774 794 763 787z" fill="#5ab5e4" />
          <path d="M777 731L799 744V758Q795 768 783 774V756Q784 742 777 731z" fill="#70c4ed" />
          <path d="M763 742L783 754V776L763 788L743 776V754z" fill="#e6edf1" />
        </g>
        <path d="M763 746L779 755L763 764L748 755z" fill="#add9f0" />
        <path d="M748 755L763 764V783L748 774z" fill="#94ceed" />
        <path d="M779 755L763 764V783L779 774z" fill="#62b6e1" />
        <g fill="#fff" fillOpacity=".5" fontWeight="bold">
          <text x="807" y="772" fontSize="45" fontFamily="Liberation Sans, sans-serif">3D</text>
          <text x="871" y="770" fontSize="38" fontFamily="Noto Sans CJK SC, sans-serif">世界网</text>
          <text x="809" y="792" fontSize="16" fontFamily="DejaVu Sans, sans-serif">WWW.3DSJW.COM</text>
        </g>
      </svg>
    </main>
  );
}

function ToolpathPanel() {
  return (
    <section className="flex w-[356px] shrink-0 flex-col bg-[#f0f0f0]">
      <header className="flex h-[42px] items-center pr-2 pl-1">
        <h2 className="flex-1 text-2xl text-[#444]">刀路</h2>
        <div className="flex items-center gap-2">
          <button aria-label="Panel menu">
            <svg viewBox="0 0 12 12" className="size-3"><path d="M0 4h12L6 9z" fill="#777" /></svg>
          </button>
          <button aria-label="Pin">
            <svg viewBox="0 0 12 12" className="size-3" fill="none" stroke="#777" strokeWidth="1.500"><path d="M3.500 7V1h5v6M1.500 7.500h9M6 7.500V12M7.500 1v6" /></svg>
          </button>
          <button aria-label="Close panel">
            <svg viewBox="0 0 12 12" className="size-3" stroke="#777" strokeWidth="2"><path d="M1 1l10 10M11 1L1 11" /></svg>
          </button>
        </div>
      </header>
      <div className="flex h-[59px] items-start pt-1 pl-1">
        <svg viewBox="0 0 10 10" className="size-2.5"><path d="M1 0l8 5-8 5z" fill={GREEN} /></svg>
      </div>
      <div className="mr-1.5 ml-0.5 flex-1 border border-b-0 border-[#b4b4b4] bg-white" />
    </section>
  );
}

function OffsetDialog() {
  const push = "flex h-8 w-[72px] items-center justify-center border border-[#adadad] bg-[#e1e1e1]";
  const field = "h-[23px] w-20 border bg-white px-[3px] text-[15px] outline-none";
  const tick = "peer col-start-1 row-start-1 size-4 appearance-none border border-[#333] bg-white";
  return (
    <div className="absolute top-[174px] left-[23px] w-[350px]">
      <div className="absolute top-2 -right-2 -bottom-2 -left-px bg-black/5 shadow-[1px_1px_2px_1px_rgba(0,0,0,0.5)]" />
      <form
        role="dialog"
        aria-labelledby="offset-title"
        onSubmit={(e) => e.preventDefault()}
        className="relative border border-[#1883d7] bg-[#f0f0f0] text-[15px] leading-[15px] text-black shadow-[0_3px_14px_rgba(0,0,0,0.4)]"
      >
        <div className="flex h-[37px] items-center justify-between bg-white pr-[15px] pl-[9px]">
          <h1 id="offset-title">工件偏移号重设</h1>
          <button type="button" aria-label="Close">
            <svg viewBox="0 0 12 12" className="size-3" stroke="#000" strokeWidth="1.200"><path d="M0 0L12 12M12 0L0 12" /></svg>
          </button>
        </div>
        <div className="px-4 pt-[15px]">
          <p>工件偏移将根据当前选定操作顺序重新编号。</p>
          <div className="mt-[38px] flex flex-col gap-[7px] pr-5 pl-2">
            <div className="flex items-center justify-between">
              <label htmlFor="start">起始工件偏移号</label>
              <span className={`${field} flex items-center border-[#0078d7]`}>
                <input
                  id="start"
                  defaultValue="0"
                  className="h-4 w-[9px] bg-[#0078d7] text-[15px] text-white outline-none"
                />
              </span>
            </div>
            <div className="flex items-center justify-between">
              <label htmlFor="step">工件偏移号增量</label>
              <input id="step" defaultValue="0" className={`${field} border-[#7a7a7a]`} />
            </div>
          </div>
          <div className="mt-[29px] flex flex-col gap-[30px] pl-1">
            <label className="flex items-center gap-[5px]">
              <span className="grid shrink-0 place-items-center">
                <input type="checkbox" defaultChecked className={tick} />
                <svg viewBox="0 0 16 16" className="pointer-events-none invisible col-start-1 row-start-1 size-4 peer-checked:visible" fill="none">
                  <path d="M3 8l3.500 3.500L13 5" stroke="#333" strokeWidth="1.300" />
                </svg>
              </span>
              <span>使用命名平面以及所有其他操作中找到的相符现有工件偏移</span>
            </label>
            <label className="flex items-center gap-[5px]">
              <input type="checkbox" className={tick} />
              <span>覆盖选定操作中定义的工件偏移</span>
            </label>
          </div>
        </div>
        <div className="flex justify-end gap-1 pt-6 pr-[13px] pb-3.5">
          <button type="submit" aria-label="OK" className={push}>
            <svg viewBox="0 0 20 20" className="size-5">
              <path d="M2 9L5 8L8 12L18 1L19 1.500Q12 9 9.500 18L7.500 19L2 12z" fill="#47c62c" stroke="#187a0b" strokeWidth="1" />
            </svg>
          </button>
          <button type="button" aria-label="Cancel" className={push}>
            <svg viewBox="0 0 20 20" className="size-5">
              <path d="M5 1L10 6L15 1L19 5L14 10L19 15L15 19L10 14L5 19L1 15L6 10L1 5z" fill="#ff4112" stroke="#b81b02" strokeLinejoin="round" />
            </svg>
          </button>
          <button type="button" aria-label="Help" className={push}>
            <svg viewBox="0 0 20 20" className="size-5" fill="none">
              <path d="M4.500 7Q4 2.500 10 2.500Q15.500 2.500 15.500 6Q15.500 8 12.500 9.500Q10 10.500 10 14.500" stroke="#35354a" strokeWidth="4.500" />
              <path d="M4.500 6.500Q4 2.500 10 2.500Q15.500 2.500 15.500 6Q15.500 8 12.500 9.500Q10 10.500 10 14" stroke="#c8c9dc" strokeWidth="2.800" />
              <ellipse cx="10" cy="17.500" rx="2.600" ry="1.800" fill="#c8c9dc" stroke="#35354a" />
            </svg>
          </button>
        </div>
      </form>
    </div>
  );
}

export default function App() {
  return (
    <div className="relative flex min-h-screen flex-col overflow-hidden bg-[#f0f0f0] font-['Noto_Sans','Noto_Sans_CJK_SC',sans-serif]">
      <nav className="flex flex-col overflow-hidden pt-1">
        <div className="-ml-px flex h-[29px] items-center">
          <ToolStrip tools={viewTools} />
        </div>
        <div className="flex h-[29px] items-center">
          <ToolStrip tools={drawTools} />
        </div>
        <div className="-ml-px flex h-9 items-center">
          <Coord axis="X" value="-30.66262" />
          <Coord axis="Y" value="22.16524" />
          <Coord axis="Z" value="0.0" />
          <span className="w-0.5 shrink-0" />
          <ToolStrip tools={selectTools} />
          <span className="w-1 shrink-0" />
          <ToolStrip tools={filterTools} />
        </div>
      </nav>
      <div className="flex flex-1">
        <Rail />
        <div className="flex min-w-0 flex-1 flex-col">
          <div className="flex h-[34px] items-center pl-[252px] text-[15px] leading-5 text-black">功能区栏</div>
          <div className="h-1 bg-[#e4e4e4]" />
          <div className="flex flex-1">
            <ToolpathPanel />
            <Viewport />
          </div>
        </div>
      </div>
      <OffsetDialog />
    </div>
  );
}
